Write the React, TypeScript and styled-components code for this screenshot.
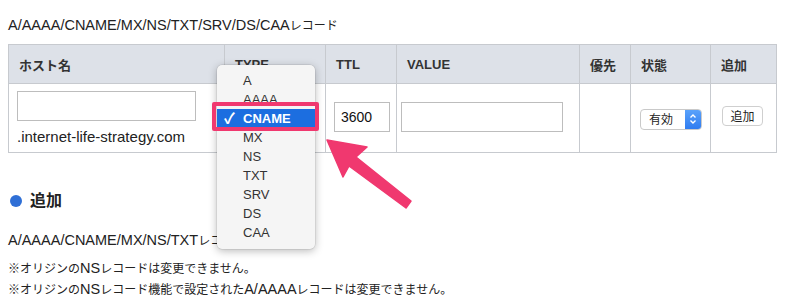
import React from 'react';
import styled, { createGlobalStyle } from 'styled-components';

const GlobalStyle = createGlobalStyle`
  body {
    margin: 0;
    background: #ffffff;
    font-family: "Liberation Sans", "Noto Sans CJK JP", sans-serif;
    font-size: 13px;
    color: #222;
  }
`;

const Page = styled.div`
  position: relative;
  width: 800px;
  height: 300px;
  padding: 0 8px;
  box-sizing: border-box;
  overflow: hidden;
`;

// Latin runs are set a little larger than the Japanese ones, as in the original
const Ja = styled.span`
  font-size: 12px;
`;

const Caption = styled.p`
  margin: 15px 0 8px;
  line-height: 20px;
  font-size: 14.5px;
`;

const Table = styled.table`
  border-collapse: collapse;
  table-layout: fixed;
  width: 768px;
`;

const HeadCell = styled.th<{ $w: number }>`
  width: ${(p) => p.$w}px;
  height: 39px;
  padding: 0 0 0 10px;
  background: #dde1e8;
  border: 1px solid #c7cacf;
  text-align: left;
  font-weight: 600;
  color: #333;
  box-sizing: border-box;
`;

const Cell = styled.td`
  height: 69px;
  padding: 0 8px;
  border: 1px solid #c7cacf;
  vertical-align: middle;
  box-sizing: border-box;
`;

const HostCell = styled(Cell)`
  vertical-align: top;
  padding-top: 7px;
`;

const TextInput = styled.input<{ $w: number }>`
  display: block;
  width: ${(p) => p.$w}px;
  height: 30px;
  box-sizing: border-box;
  border: 1px solid #bdbdbd;
  border-radius: 0;
  padding: 0 6px;
  font: inherit;
  font-size: 14px;
  color: #111;
  margin-top: -3px;
`;

const HostInput = styled(TextInput)`
  margin-top: 0;
`;

const Domain = styled.div`
  margin-top: 7px;
  font-size: 15px;
  color: #222;
`;

const StatusSelect = styled.div`
  display: flex;
  width: 62px;
  height: 21px;
  margin: 2px 0 0 1px;
  border: 1px solid #c9c9c9;
  border-radius: 4px;
  overflow: hidden;
  box-sizing: border-box;
  background: #fff;
`;

const StatusLabel = styled.span`
  flex: 1;
  padding-left: 8px;
  line-height: 20px;
  font-size: 12px;
  color: #222;
`;

const Stepper = styled.span`
  width: 16px;
  display: flex;
  align-items: center;
  justify-content: center;
  background: linear-gradient(#5aa2fb, #2f7cf0);
`;

const SmallButton = styled.button`
  display: block;
  width: 41px;
  height: 20px;
  margin: -5px 0 0 3px;
  padding: 0;
  border: 1px solid #cfcfcf;
  border-radius: 4px;
  background: #fff;
  font: inherit;
  font-size: 12px;
  color: #222;
`;

const SectionTitle = styled.h3`
  display: flex;
  align-items: center;
  gap: 8px;
  margin: 36px 0 17px;
  line-height: 24px;
  font-size: 16px;
  font-weight: 700;
  color: #222;
`;

const Dot = styled.span`
  width: 12px;
  height: 12px;
  margin-left: 2px;
  border-radius: 50%;
  background: #2f6fd6;
`;

const Line = styled.p<{ $gap?: number }>`
  margin: ${(p) => p.$gap ?? 0}px 0 0;
  line-height: 20px;
  font-size: 14.5px;
`;

const Menu = styled.ul`
  position: absolute;
  left: 217px;
  top: 65px;
  width: 98px;
  margin: 0;
  padding: 6px 0 7px;
  list-style: none;
  background: #f5f5f5;
  border-radius: 5px;
  box-shadow: 0 2px 8px rgba(0, 0, 0, 0.28), 0 0 0 0.5px rgba(0, 0, 0, 0.12);
`;

const MenuItem = styled.li<{ $active?: boolean }>`
  position: relative;
  height: 19px;
  line-height: 19px;
  padding-left: 26px;
  font-size: 13px;
  color: ${(p) => (p.$active ? '#fff' : '#333')};
  font-weight: ${(p) => (p.$active ? 700 : 400)};
  background: ${(p) => (p.$active ? '#1c6ee0' : 'transparent')};
`;

const Check = styled.span`
  position: absolute;
  left: 7px;
  top: 0;
  font-size: 15px;
`;

const Highlight = styled.div`
  position: absolute;
  left: 212px;
  top: 102px;
  width: 107px;
  height: 29px;
  border: 4px solid #f0386f;
  border-radius: 2px;
  box-sizing: border-box;
`;

const Arrow = styled.svg`
  position: absolute;
  left: 0;
  top: 0;
`;

const types = ['A', 'AAAA', 'CNAME', 'MX', 'NS', 'TXT', 'SRV', 'DS', 'CAA'];

export default function App() {
  return (
    <Page>
      <GlobalStyle />
      <Caption>
        A/AAAA/CNAME/MX/NS/TXT/SRV/DS/CAA<Ja>レコード</Ja>
      </Caption>
      <Table>
        <thead>
          <tr>
            <HeadCell $w={216}>ホスト名</HeadCell>
            <HeadCell $w={101}>TYPE</HeadCell>
            <HeadCell $w={71}>TTL</HeadCell>
            <HeadCell $w={183}>VALUE</HeadCell>
            <HeadCell $w={51}>優先</HeadCell>
            <HeadCell $w={80}>状態</HeadCell>
            <HeadCell $w={66}>追加</HeadCell>
          </tr>
        </thead>
        <tbody>
          <tr>
            <HostCell>
              <HostInput $w={179} />
              <Domain>.internet-life-strategy.com</Domain>
            </HostCell>
            <Cell />
            <Cell>
              <TextInput $w={56} defaultValue="3600" />
            </Cell>
            <Cell>
              <TextInput $w={162} style={{ marginLeft: -4 }} />
            </Cell>
            <Cell />
            <Cell>
              <StatusSelect>
                <StatusLabel>有効</StatusLabel>
                <Stepper>
                  <svg width="8" height="12" viewBox="0 0 8 12">
                    <path d="M1.5 4.5 L4 2 L6.5 4.5 M1.5 7.5 L4 10 L6.5 7.5" fill="none" stroke="#fff" strokeWidth="1.4" />
                  </svg>
                </Stepper>
              </StatusSelect>
            </Cell>
            <Cell>
              <SmallButton>追加</SmallButton>
            </Cell>
          </tr>
        </tbody>
      </Table>

      <SectionTitle>
        <Dot />
        追加
      </SectionTitle>
      <Line>
        A/AAAA/CNAME/MX/NS/TXT<Ja>レコード</Ja>
      </Line>
      <Line $gap={7}>
        <Ja>※オリジンの</Ja>NS<Ja>レコードは変更できません。</Ja>
      </Line>
      <Line>
        <Ja>※オリジンの</Ja>NS<Ja>レコード機能で設定された</Ja>A/AAAA<Ja>レコードは変更できません。</Ja>
      </Line>

      <Menu>
        {types.map((t) => (
          <MenuItem key={t} $active={t === 'CNAME'}>
            {t === 'CNAME' && <Check>✓</Check>}
            {t}
          </MenuItem>
        ))}
      </Menu>
      <Highlight />
      <Arrow width="800" height="300" viewBox="0 0 800 300">
        <polygon
          points="327,140 367,147 356,157 411,201 406,208 349,166 343,177"
          fill="#f0386f"
          strokeLinejoin="round"
          stroke="#f0386f"
          strokeWidth="1.5"
        />
      </Arrow>
    </Page>
  );
}
